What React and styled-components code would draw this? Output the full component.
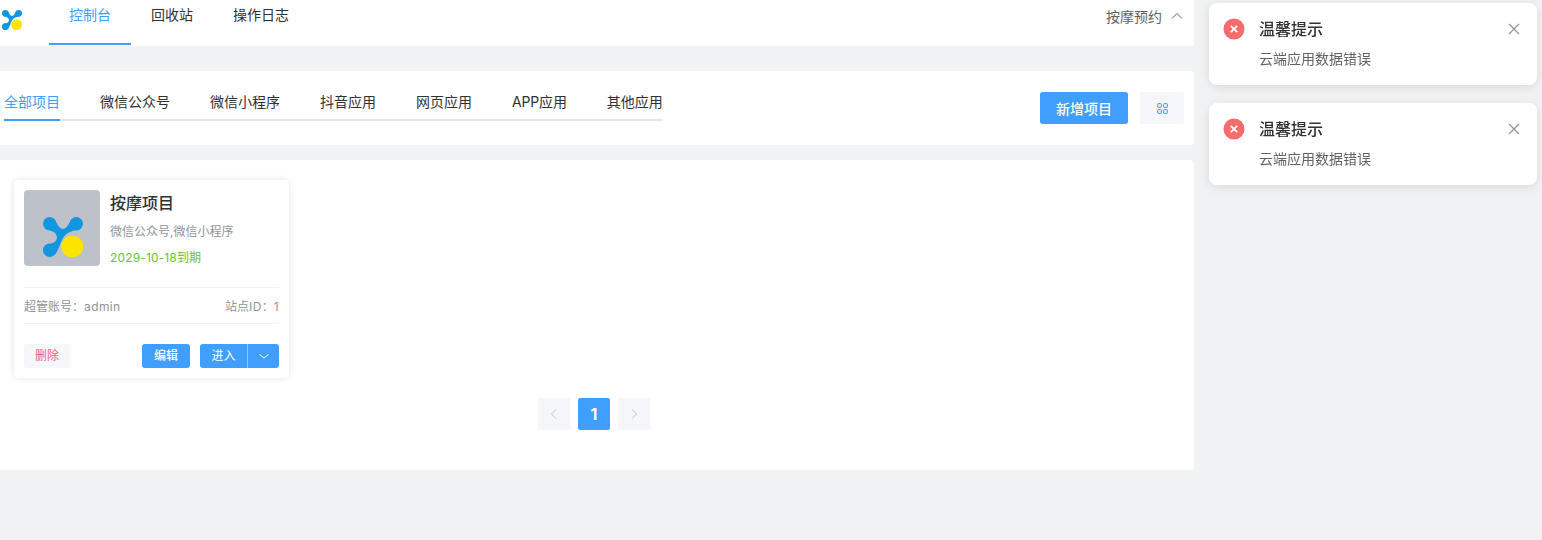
import styled, { createGlobalStyle } from "styled-components";

const FONT = `Inter, "Noto Sans CJK SC", sans-serif`;

const GlobalStyle = createGlobalStyle`
  html, body {
    margin: 0;
    height: 100%;
    overflow: hidden;
    background: #f1f2f4;
    font-family: ${FONT};
    color: #303133;
  }
`;

const Header = styled.header`
  display: flex;
  align-items: flex-start;
  justify-content: space-between;
  height: 46px;
  width: 1194px;
  background: #fff;
  padding: 0 11px 0 2px;
  box-sizing: border-box;
`;

const Left = styled.div`
  display: flex;
`;

const LogoSlot = styled.div`
  width: 47px;
  padding-top: 10px;
  box-sizing: border-box;
`;

const NavItem = styled.div`
  box-sizing: border-box;
  height: 45px;
  padding: 4px 20px 0;
  line-height: 22px;
  font-size: 14px;
  color: ${(p) => (p.$active ? "#409eff" : "#303133")};
  border-bottom: 2px solid ${(p) => (p.$active ? "#409eff" : "transparent")};
`;

const UserMenu = styled.div`
  display: flex;
  align-items: center;
  gap: 9px;
  height: 32px;
  font-size: 14px;
  color: #606266;
`;

const Panel = styled.section`
  background: #fff;
  width: 1194px;
  border-radius: 0 4px 4px 0;
  box-sizing: border-box;
`;

const FilterPanel = styled(Panel)`
  display: flex;
  justify-content: space-between;
  height: 74px;
  margin-top: 25px;
  padding: 11px 10px 0 4px;
`;

const Tabs = styled.div`
  display: flex;
  gap: 40px;
  height: 37px;
  border-bottom: 2px solid #e4e7ed;
`;

const Tab = styled.div`
  height: 37px;
  line-height: 39px;
  font-size: 14px;
  letter-spacing: ${(p) => (p.$latin ? "-0.15px" : "0")};
  color: ${(p) => (p.$active ? "#409eff" : "#303133")};
  border-bottom: 2px solid ${(p) => (p.$active ? "#409eff" : "transparent")};
`;

const Actions = styled.div`
  display: flex;
  gap: 12px;
  margin-top: 10px;
`;

const PrimaryButton = styled.div`
  display: flex;
  align-items: center;
  justify-content: center;
  width: 88px;
  height: 32px;
  border-radius: 3px;
  background: #409eff;
  color: #fff;
  font-size: 14px;
  font-weight: 500;
`;

const GridButton = styled.div`
  display: flex;
  align-items: center;
  justify-content: center;
  width: 44px;
  height: 32px;
  border-radius: 3px;
  background: #f4f6fb;
`;

const ListPanel = styled(Panel)`
  height: 310px;
  margin-top: 15px;
  padding: 20px 0 0 14px;
`;

const Card = styled.article`
  box-sizing: border-box;
  width: 275px;
  height: 198px;
  padding: 10px;
  border-radius: 4px;
  background: #fff;
  box-shadow: 0 0 6px rgba(0, 0, 0, 0.12);
`;

const CardTop = styled.div`
  display: flex;
  gap: 10px;
  height: 97px;
  border-bottom: 1px solid #f0f1f3;
`;

const Thumb = styled.div`
  box-sizing: border-box;
  width: 76px;
  height: 76px;
  padding: 27px 0 0 19px;
  border-radius: 4px;
  background: #bdc1ca;
`;

const CardTitle = styled.div`
  font-size: 16px;
  font-weight: 500;
  line-height: 26px;
  color: #303133;
`;

const CardSub = styled.div`
  margin-top: 2px;
  font-size: 12px;
  line-height: 28px;
  color: #909399;
`;

const CardDate = styled.div`
  font-size: 12px;
  line-height: 24px;
  color: #67c23a;
  letter-spacing: 0.15px;
`;

const CardMeta = styled.div`
  display: flex;
  justify-content: space-between;
  align-items: center;
  height: 35px;
  font-size: 12px;
  color: #909399;
  border-bottom: 1px solid #f0f1f3;
`;

const MetaLatin = styled.span`
  letter-spacing: 0.4px;
`;

const CardFoot = styled.div`
  display: flex;
  align-items: center;
  margin-top: 20px;
`;

const DeleteButton = styled.div`
  width: 46px;
  height: 24px;
  line-height: 23px;
  margin-right: auto;
  text-align: center;
  font-size: 12px;
  border-radius: 3px;
  background: #f6f7fb;
  color: #f5607a;
`;

const SmallButton = styled.div`
  width: 48px;
  height: 24px;
  line-height: 23px;
  margin-right: 10px;
  text-align: center;
  font-size: 12px;
  font-weight: 500;
  border-radius: 3px;
  background: #409eff;
  color: #fff;
`;

const SplitButton = styled.div`
  display: flex;
  width: 79px;
  height: 24px;
  line-height: 23px;
  font-size: 12px;
  border-radius: 3px;
  background: #409eff;
  color: #fff;
`;

const SplitMain = styled.div`
  width: 47px;
  text-align: center;
  border-right: 1px solid #8cc5ff;
`;

const SplitArrow = styled.div`
  display: flex;
  flex: 1;
  align-items: center;
  justify-content: center;
`;

const Pager = styled.nav`
  display: flex;
  justify-content: center;
  gap: 8px;
  width: 1160px;
  margin-top: 20px;
`;

const PageButton = styled.div`
  display: flex;
  align-items: center;
  justify-content: center;
  width: 32px;
  height: 32px;
  border-radius: 2px;
  font-size: 16px;
  font-weight: 700;
  background: ${(p) => (p.$active ? "#409eff" : "#f5f6fa")};
  color: ${(p) => (p.$active ? "#fff" : "#c0c4cc")};
`;

const Toasts = styled.aside`
  position: fixed;
  top: 3px;
  left: 1209px;
  display: flex;
  flex-direction: column;
  gap: 18px;
  width: 328px;
`;

const Toast = styled.div`
  display: flex;
  box-sizing: border-box;
  height: 82px;
  padding: 15px 17px 0 14px;
  border-radius: 8px;
  background: #fff;
  box-shadow: 0 2px 12px rgba(0, 0, 0, 0.1);
`;

const ToastBody = styled.div`
  flex: 1;
  margin-left: 14px;
`;

const ToastTitle = styled.div`
  font-size: 16px;
  font-weight: 500;
  line-height: 22px;
  color: #303133;
`;

const ToastText = styled.div`
  margin-top: 8px;
  font-size: 14px;
  line-height: 22px;
  color: #606266;
`;

const ToastClose = styled.div`
  display: flex;
  align-items: flex-start;
  padding-top: 5px;
`;

const Logo = ({ size }) => (
  <svg width={size} height={size} viewBox="0 0 40 40">
    <path
      d="M11.4 2C14 7 17 12 20 12C23 12 26 7 28.6 2L38 11.4C33 13 27 14 23.5 17C20 19.5 18.5 24 17 28C15.5 32 13.5 36 11.4 38L2 28.6C6 27 10 27 12.5 24C15 21 14 19 12 16C10 14 6 13 2 11.4Z"
      fill="#1296e0"
    />
    <circle cx="6.7" cy="6.7" r="6.7" fill="#1296e0" />
    <circle cx="33.3" cy="6.7" r="6.7" fill="#1296e0" />
    <circle cx="6.7" cy="33.3" r="6.7" fill="#1296e0" />
    <circle cx="29.3" cy="29.5" r="11" fill="#fce300" />
  </svg>
);

const Chevron = ({ d, size = 12, color = "#606266" }) => (
  <svg width={size} height={size} viewBox="0 0 12 12">
    <path d={d} fill="none" stroke={color} strokeWidth="1" />
  </svg>
);

const UP = "M1 8.5L6 3.5L11 8.5";
const DOWN = "M1.5 4.5L6 8L10.5 4.5";
const LEFT = "M8 1.5L3.5 6L8 10.5";
const RIGHT = "M4 1.5L8.5 6L4 10.5";

const GridIcon = () => (
  <svg width="11" height="11" viewBox="0 0 11 11" fill="#d9ecff" stroke="#409eff" strokeWidth="1">
    <rect x="0.5" y="0.5" width="4" height="4" rx="1.2" />
    <rect x="6.5" y="0.5" width="4" height="4" rx="1.2" />
    <rect x="0.5" y="6.5" width="4" height="4" rx="1.2" />
    <rect x="6.5" y="6.5" width="4" height="4" rx="1.2" />
  </svg>
);

const ErrorIcon = () => (
  <svg width="22" height="22" viewBox="0 0 22 22">
    <circle cx="11" cy="11" r="10.5" fill="#f56c6c" />
    <path d="M7.8 7.8L14.2 14.2M14.2 7.8L7.8 14.2" stroke="#fff" strokeWidth="1.8" />
  </svg>
);

const CloseIcon = () => (
  <svg width="12" height="12" viewBox="0 0 12 12">
    <path d="M1 1L11 11M11 1L1 11" stroke="#909399" strokeWidth="1.2" />
  </svg>
);

const tabs = ["全部项目", "微信公众号", "微信小程序", "抖音应用", "网页应用", "APP应用", "其他应用"];

export default function App() {
  return (
    <>
      <GlobalStyle />
      <Header>
        <Left>
          <LogoSlot>
            <Logo size={20} />
          </LogoSlot>
          <NavItem $active>控制台</NavItem>
          <NavItem>回收站</NavItem>
          <NavItem>操作日志</NavItem>
        </Left>
        <UserMenu>
          按摩预约
          <Chevron d={UP} />
        </UserMenu>
      </Header>

      <FilterPanel>
        <Tabs>
          {tabs.map((t, i) => (
            <Tab key={t} $active={i === 0} $latin={t.startsWith("APP")}>
              {t}
            </Tab>
          ))}
        </Tabs>
        <Actions>
          <PrimaryButton>新增项目</PrimaryButton>
          <GridButton>
            <GridIcon />
          </GridButton>
        </Actions>
      </FilterPanel>

      <ListPanel>
        <Card>
          <CardTop>
            <Thumb>
              <Logo size={40} />
            </Thumb>
            <div>
              <CardTitle>按摩项目</CardTitle>
              <CardSub>微信公众号,微信小程序</CardSub>
              <CardDate>2029-10-18到期</CardDate>
            </div>
          </CardTop>
          <CardMeta>
            <span>
              超管账号：<MetaLatin>admin</MetaLatin>
            </span>
            <span>
              站点<MetaLatin>ID</MetaLatin>：<MetaLatin>1</MetaLatin>
            </span>
          </CardMeta>
          <CardFoot>
            <DeleteButton>删除</DeleteButton>
            <SmallButton>编辑</SmallButton>
            <SplitButton>
              <SplitMain>进入</SplitMain>
              <SplitArrow>
                <Chevron d={DOWN} color="#fff" />
              </SplitArrow>
            </SplitButton>
          </CardFoot>
        </Card>
        <Pager>
          <PageButton>
            <Chevron d={LEFT} color="#c0c4cc" />
          </PageButton>
          <PageButton $active>1</PageButton>
          <PageButton>
            <Chevron d={RIGHT} color="#c0c4cc" />
          </PageButton>
        </Pager>
      </ListPanel>

      <Toasts>
        {[0, 1].map((n) => (
          <Toast key={n}>
            <ErrorIcon />
            <ToastBody>
              <ToastTitle>温馨提示</ToastTitle>
              <ToastText>云端应用数据错误</ToastText>
            </ToastBody>
            <ToastClose>
              <CloseIcon />
            </ToastClose>
          </Toast>
        ))}
      </Toasts>
    </>
  );
}
